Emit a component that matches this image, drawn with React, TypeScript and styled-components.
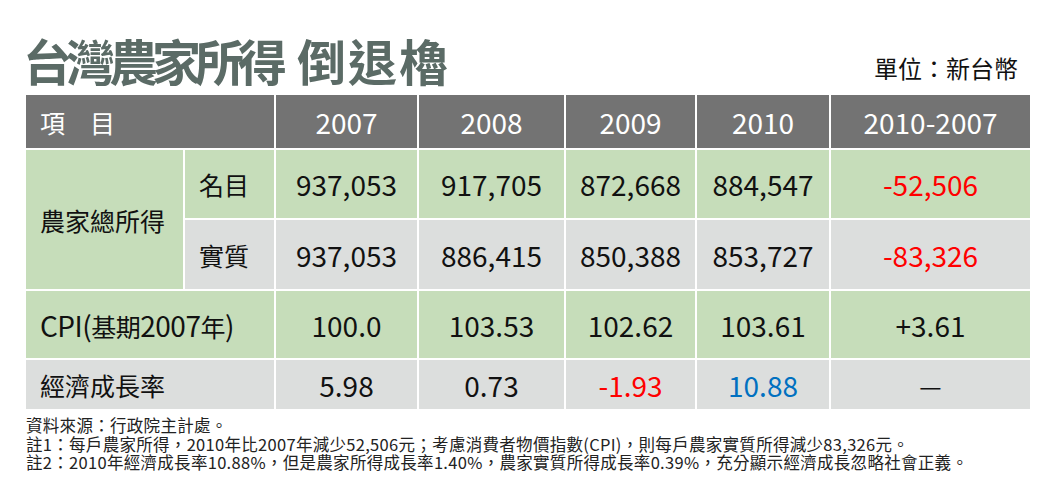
import React from 'react';
import styled, { createGlobalStyle } from 'styled-components';

const GlobalStyle = createGlobalStyle`
  html, body {
    margin: 0;
    padding: 0;
    background: #ffffff;
  }
  body {
    font-family: "Noto Sans CJK TC", "Noto Sans", sans-serif;
    color: #111111;
  }
`;

const Page = styled.div`
  width: 1056px;
  height: 504px;
  padding: 0 26px;
  box-sizing: border-box;
  overflow: hidden;
`;

const TitleBar = styled.div`
  width: 1004px;
  height: 95px;
  display: flex;
  justify-content: space-between;
  align-items: flex-end;
  box-sizing: border-box;
  padding-bottom: 6px;
`;

const Title = styled.h1`
  margin: 0 0 0 -3px;
  font-size: 49px;
  line-height: 58px;
  font-weight: 700;
  color: #5b6b66;
  white-space: nowrap;
`;

const TitlePart = styled.span<{ $spacing: number; $gap?: number }>`
  letter-spacing: ${(p) => p.$spacing}px;
  margin-left: ${(p) => p.$gap ?? 0}px;
`;

const Unit = styled.div`
  font-size: 24px;
  line-height: 30px;
  color: #111111;
  margin-right: 12px;
  margin-bottom: 6px;
`;

const Table = styled.div`
  display: grid;
  grid-template-columns: 157px 89px 141px 145px 129px 132px 199px;
  grid-template-rows: 53px 68px 69px 67px 49px;
  gap: 2px;
  width: 1004px;
`;

const Cell = styled.div<{ $tone: 'head' | 'green' | 'gray'; $span?: number; $rows?: number; $align?: 'left' | 'center'; $color?: string }>`
  display: flex;
  align-items: center;
  justify-content: ${(p) => (p.$align === 'left' ? 'flex-start' : 'center')};
  padding-left: ${(p) => (p.$align === 'left' ? '14px' : '0')};
  grid-column: span ${(p) => p.$span ?? 1};
  grid-row: span ${(p) => p.$rows ?? 1};
  background: ${(p) => (p.$tone === 'head' ? '#737373' : p.$tone === 'green' ? '#c6ddba' : '#dcdedd')};
  color: ${(p) => (p.$tone === 'head' ? '#ffffff' : p.$color ?? '#111111')};
  font-size: 25px;
  white-space: nowrap;
`;

const Num = styled.span`
  font-size: 28px;
`;

const Label = styled.span`
  letter-spacing: -0.5px;
`;

const Notes = styled.div`
  margin-top: 7px;
  font-size: 16.5px;
  line-height: 18.5px;
  letter-spacing: 0.3px;
  color: #222222;
  white-space: nowrap;
`;

const RED = '#ff0000';
const BLUE = '#0070c0';

const years = ['2007', '2008', '2009', '2010', '2010-2007'];

const App = () => (
  <Page>
    <GlobalStyle />
    <TitleBar>
      <Title>
        <TitlePart $spacing={-6}>台灣農家所得</TitlePart>
        <TitlePart $spacing={2} $gap={16}>倒退櫓</TitlePart>
      </Title>
      <Unit>單位：新台幣</Unit>
    </TitleBar>
    <Table>
      <Cell $tone="head" $span={2} $align="left">項　目</Cell>
      {years.map((y) => (
        <Cell key={y} $tone="head">
          <Num>{y}</Num>
        </Cell>
      ))}

      <Cell $tone="green" $rows={2} $align="left">農家總所得</Cell>
      <Cell $tone="green" $align="left">名目</Cell>
      <Cell $tone="green"><Num>937,053</Num></Cell>
      <Cell $tone="green"><Num>917,705</Num></Cell>
      <Cell $tone="green"><Num>872,668</Num></Cell>
      <Cell $tone="green"><Num>884,547</Num></Cell>
      <Cell $tone="green" $color={RED}><Num>-52,506</Num></Cell>

      <Cell $tone="gray" $align="left">實質</Cell>
      <Cell $tone="gray"><Num>937,053</Num></Cell>
      <Cell $tone="gray"><Num>886,415</Num></Cell>
      <Cell $tone="gray"><Num>850,388</Num></Cell>
      <Cell $tone="gray"><Num>853,727</Num></Cell>
      <Cell $tone="gray" $color={RED}><Num>-83,326</Num></Cell>

      <Cell $tone="green" $span={2} $align="left">
        <Label>
          <Num>CPI(</Num>基期<Num>2007</Num>年<Num>)</Num>
        </Label>
      </Cell>
      <Cell $tone="green"><Num>100.0</Num></Cell>
      <Cell $tone="green"><Num>103.53</Num></Cell>
      <Cell $tone="green"><Num>102.62</Num></Cell>
      <Cell $tone="green"><Num>103.61</Num></Cell>
      <Cell $tone="green"><Num>+3.61</Num></Cell>

      <Cell $tone="gray" $span={2} $align="left">經濟成長率</Cell>
      <Cell $tone="gray"><Num>5.98</Num></Cell>
      <Cell $tone="gray"><Num>0.73</Num></Cell>
      <Cell $tone="gray" $color={RED}><Num>-1.93</Num></Cell>
      <Cell $tone="gray" $color={BLUE}><Num>10.88</Num></Cell>
      <Cell $tone="gray">—</Cell>
    </Table>
    <Notes>
      <div>資料來源：行政院主計處。</div>
      <div>註1：每戶農家所得，2010年比2007年減少52,506元；考慮消費者物價指數(CPI)，則每戶農家實質所得減少83,326元。</div>
      <div>註2：2010年經濟成長率10.88%，但是農家所得成長率1.40%，農家實質所得成長率0.39%，充分顯示經濟成長忽略社會正義。</div>
    </Notes>
  </Page>
);

export default App;
